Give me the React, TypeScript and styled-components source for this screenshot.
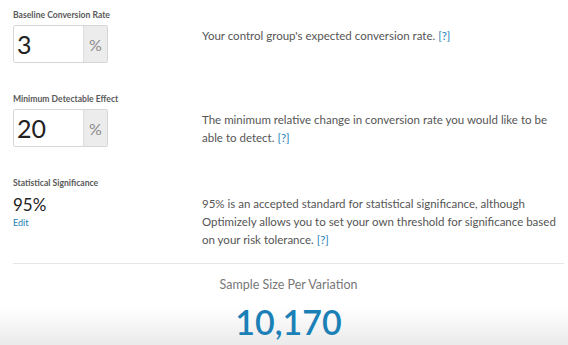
import React from 'react';
import styled, {createGlobalStyle} from 'styled-components';

const GlobalStyle = createGlobalStyle`
  html, body {
    margin: 0;
    padding: 0;
  }
  body {
    min-height: 345px;
    background: linear-gradient(to bottom, #fff 0, #fff 308px, #eaeaea 345px);
    font-family: Lato, "Open Sans", sans-serif;
    color: #555;
  }
`;

interface FieldI {
    label: string;
    value: string;
    description: string;
}

const fields: FieldI[] = [
    {
        label: 'Baseline Conversion Rate',
        value: '3',
        description: "Your control group's expected conversion rate."
    },
    {
        label: 'Minimum Detectable Effect',
        value: '20',
        description: 'The minimum relative change in conversion rate you would like to be able to detect.'
    }
];

const App = () => {
    return <Page>
        <GlobalStyle/>
        {fields.map(field => <Row key={field.label}>
            <div>
                <Label>{field.label}</Label>
                <InputGroup>
                    <NumberBox>{field.value}</NumberBox>
                    <Addon>%</Addon>
                </InputGroup>
            </div>
            <Description>
                {field.description} <Help href="#">[?]</Help>
            </Description>
        </Row>)}
        <Row>
            <div>
                <Label>Statistical Significance</Label>
                <Significance>95%</Significance>
                <EditLink href="#">Edit</EditLink>
            </div>
            <Description>
                95% is an accepted standard for statistical significance, although
                Optimizely allows you to set your own threshold for significance based
                on your risk tolerance. <Help href="#">[?]</Help>
            </Description>
        </Row>
        <Result>
            <ResultTitle>Sample Size Per Variation</ResultTitle>
            <ResultValue>10,170</ResultValue>
        </Result>
    </Page>
}

const Page = styled.div`
  padding: 10px 4px 0 13px;
`;

const Row = styled.div`
  display: grid;
  grid-template-columns: 189px 1fr;
  margin-bottom: 31px;
  &:nth-of-type(3) {
    margin-bottom: 14px;
  }
`;

const Label = styled.div`
  font-size: 8.6px;
  line-height: 10px;
  font-weight: 700;
  color: #5a5a5a;
  margin-bottom: 5px;
`;

const InputGroup = styled.div`
  display: flex;
  width: 95px;
  height: 38px;
  box-sizing: border-box;
  border: 1px solid #d6d6d6;
  border-radius: 2px;
`;

const NumberBox = styled.div`
  flex: 1;
  padding-left: 3px;
  font-size: 25px;
  line-height: 36px;
  color: #222;
  background: #fff;
`;

const Addon = styled.div`
  width: 23px;
  display: flex;
  align-items: center;
  justify-content: center;
  border-left: 1px solid #ddd;
  background: #ececec;
  color: #8a8a8a;
  font-size: 16px;
`;

const Description = styled.p`
  margin: 0;
  padding-top: 17px;
  font-size: 11.5px;
  line-height: 18px;
  color: #555;
`;

const Help = styled.a`
  color: #1a80b6;
  text-decoration: none;
`;

const Significance = styled.div`
  margin-top: 7px;
  font-size: 17px;
  line-height: 20px;
  color: #222;
`;

const EditLink = styled.a`
  display: block;
  margin-top: 2px;
  font-size: 9px;
  line-height: 12px;
  color: #1a80b6;
  text-decoration: none;
`;

const Result = styled.div`
  border-top: 1px solid #e6e6e6;
  text-align: center;
  padding-top: 13px;
`;

const ResultTitle = styled.div`
  font-size: 12.5px;
  line-height: 16px;
  color: #777;
`;

const ResultValue = styled.div`
  margin-top: 7px;
  font-size: 34px;
  line-height: 44px;
  font-weight: 600;
  color: #1a80b6;
`;

export default App;
